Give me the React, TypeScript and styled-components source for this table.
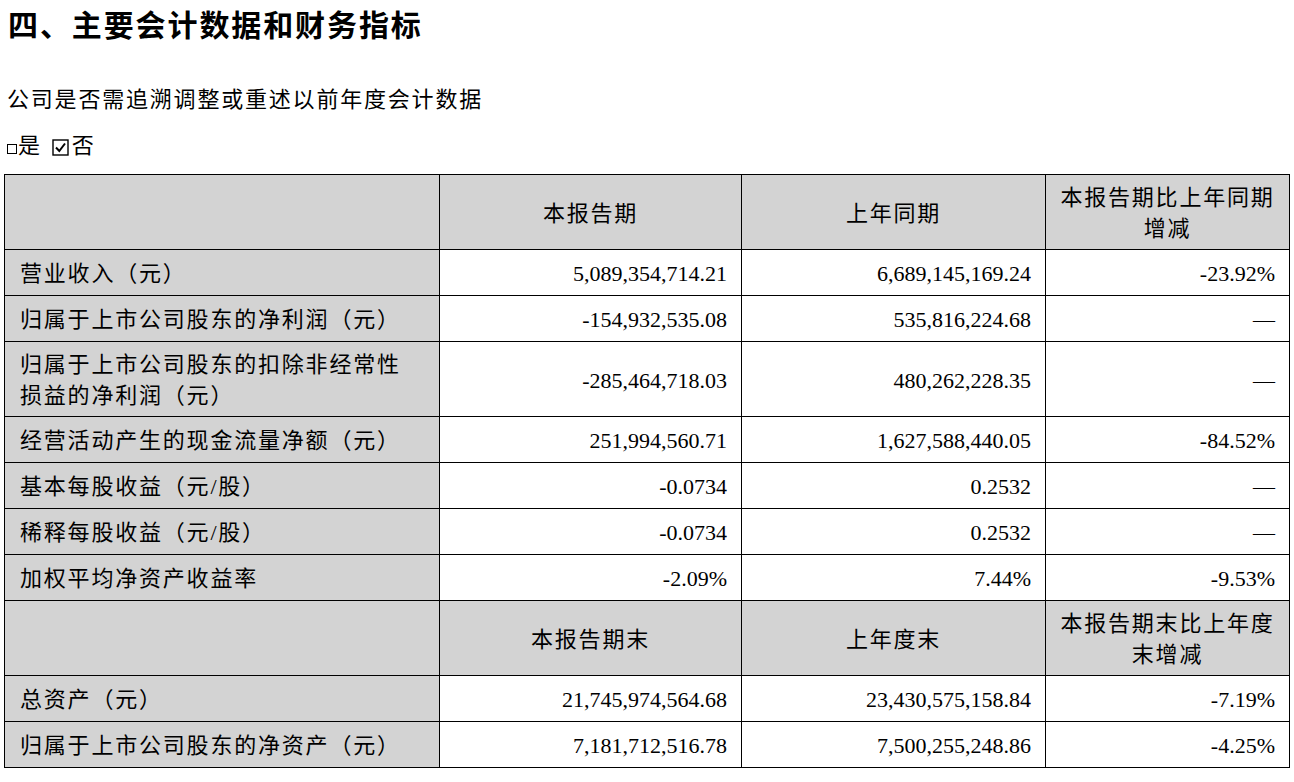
import React from "react";
import styled, { createGlobalStyle } from "styled-components";

const GlobalStyle = createGlobalStyle`
  html, body {
    margin: 0;
    padding: 0;
    background: #ffffff;
  }
  body {
    font-family: "Liberation Serif", "Noto Sans CJK SC", serif;
    color: #000000;
  }
`;

const Page = styled.div`
  width: 1294px;
  padding-top: 8px;
`;

const Title = styled.h1`
  margin: 0 0 0 8px;
  font-family: "Noto Sans CJK SC", sans-serif;
  font-size: 30px;
  line-height: 30px;
  font-weight: 700;
  letter-spacing: 1.9px;
`;

const Para = styled.p<{ $gap: number }>`
  margin: ${({ $gap }) => $gap}px 0 0 7px;
  height: 30px;
  font-size: 22px;
  line-height: 30px;
  letter-spacing: 1.8px;
  display: flex;
  align-items: center;
`;

const SmallBox = styled.span`
  display: inline-block;
  box-sizing: border-box;
  width: 10px;
  height: 10px;
  border: 1px solid #000;
  margin: 5px 1px 0 0;
`;

const CheckIcon = styled.svg`
  width: 17px;
  height: 17px;
  margin: 2px 3px 0 10px;
  flex: none;
`;

const Table = styled.table`
  margin: 13px 0 0 4px;
  width: 1285px;
  border-collapse: collapse;
  table-layout: fixed;
  font-size: 22px;
  line-height: 31px;
`;

const Row = styled.tr<{ $tall?: boolean }>`
  height: ${({ $tall }) => ($tall ? 75 : 46)}px;
`;

const Cell = styled.td<{ $head?: boolean; $label?: boolean }>`
  border: 1px solid #000;
  padding: ${({ $head }) => ($head ? "2px 4px 0" : "2px 14px 0 15px")};
  vertical-align: middle;
  white-space: nowrap;
  background: ${({ $head, $label }) => ($head || $label ? "#d3d3d3" : "#ffffff")};
  text-align: ${({ $head, $label }) => ($head ? "center" : $label ? "left" : "right")};
  letter-spacing: ${({ $head, $label }) => ($head || $label ? "1.8px" : "0")};
`;

type DataRow = { label: React.ReactNode; tall?: boolean; values: string[] };

const DASH = "—";

const topRows: DataRow[] = [
  { label: "营业收入（元）", values: ["5,089,354,714.21", "6,689,145,169.24", "-23.92%"] },
  { label: "归属于上市公司股东的净利润（元）", values: ["-154,932,535.08", "535,816,224.68", DASH] },
  {
    label: (
      <>
        归属于上市公司股东的扣除非经常性
        <br />
        损益的净利润（元）
      </>
    ),
    tall: true,
    values: ["-285,464,718.03", "480,262,228.35", DASH],
  },
  { label: "经营活动产生的现金流量净额（元）", values: ["251,994,560.71", "1,627,588,440.05", "-84.52%"] },
  { label: "基本每股收益（元/股）", values: ["-0.0734", "0.2532", DASH] },
  { label: "稀释每股收益（元/股）", values: ["-0.0734", "0.2532", DASH] },
  { label: "加权平均净资产收益率", values: ["-2.09%", "7.44%", "-9.53%"] },
];

const bottomRows: DataRow[] = [
  { label: "总资产（元）", values: ["21,745,974,564.68", "23,430,575,158.84", "-7.19%"] },
  { label: "归属于上市公司股东的净资产（元）", values: ["7,181,712,516.78", "7,500,255,248.86", "-4.25%"] },
];

function HeaderRow({ cols }: { cols: React.ReactNode[] }) {
  return (
    <Row $tall>
      <Cell $head />
      {cols.map((c, i) => (
        <Cell $head key={i}>
          {c}
        </Cell>
      ))}
    </Row>
  );
}

function Body({ rows }: { rows: DataRow[] }) {
  return (
    <>
      {rows.map((r, i) => (
        <Row $tall={r.tall} key={i}>
          <Cell $label>{r.label}</Cell>
          {r.values.map((v, j) => (
            <Cell key={j}>{v}</Cell>
          ))}
        </Row>
      ))}
    </>
  );
}

export default function App() {
  return (
    <Page>
      <GlobalStyle />
      <Title>四、主要会计数据和财务指标</Title>
      <Para $gap={47}>公司是否需追溯调整或重述以前年度会计数据</Para>
      <Para $gap={16}>
        <SmallBox />是
        <CheckIcon viewBox="0 0 17 17" aria-hidden="true">
          <rect x="1" y="1" width="15" height="15" fill="none" stroke="#000" strokeWidth="1.4" />
          <path d="M4 8.5 L7.3 12 L13 4.5" fill="none" stroke="#000" strokeWidth="2" />
        </CheckIcon>
        否
      </Para>
      <Table>
        <colgroup>
          <col style={{ width: 435 }} />
          <col style={{ width: 302 }} />
          <col style={{ width: 304 }} />
          <col style={{ width: 244 }} />
        </colgroup>
        <tbody>
          <HeaderRow
            cols={[
              "本报告期",
              "上年同期",
              <>
                本报告期比上年同期
                <br />
                增减
              </>,
            ]}
          />
          <Body rows={topRows} />
          <HeaderRow
            cols={[
              "本报告期末",
              "上年度末",
              <>
                本报告期末比上年度
                <br />
                末增减
              </>,
            ]}
          />
          <Body rows={bottomRows} />
        </tbody>
      </Table>
    </Page>
  );
}
